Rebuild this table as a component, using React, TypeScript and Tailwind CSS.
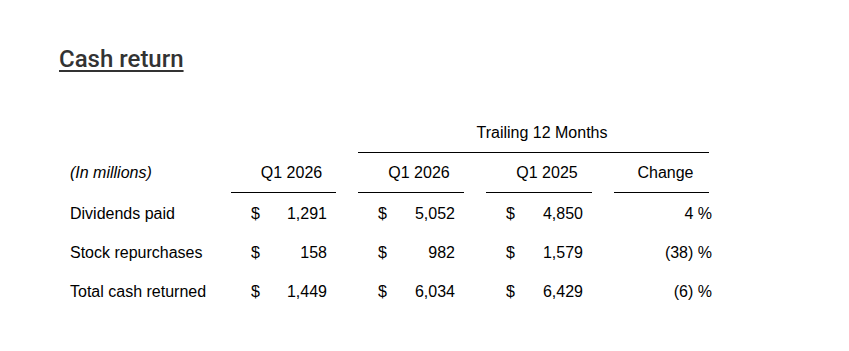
const rows = [
  { label: 'Dividends paid', q1: '1,291', ttm26: '5,052', ttm25: '4,850', change: '4 %' },
  { label: 'Stock repurchases', q1: '158', ttm26: '982', ttm25: '1,579', change: '(38) %' },
  { label: 'Total cash returned', q1: '1,449', ttm26: '6,034', ttm25: '6,429', change: '(6) %' },
];

function Money({ value }: { value: string }) {
  return (
    <div className="flex justify-between pl-5 pr-[9px]">
      <span>$</span>
      <span>{value}</span>
    </div>
  );
}

export default function App() {
  return (
    <div className="h-[351px] w-[849px] bg-white pl-[59px] pt-[45px]">
      <h1 className="font-['Roboto',sans-serif] text-[24px] font-medium leading-[28px] text-[#333333] underline decoration-2 underline-offset-[3px]">
        Cash return
      </h1>

      {/* table */}
      <div className="mt-[51px] grid grid-cols-[150px_105px_106px_106px_95px] gap-x-[22px] font-['Liberation_Sans',Arial,sans-serif] text-[16px] leading-[18px] text-black">
        <div className="col-start-3 col-end-6 border-b border-black pb-[10px] pl-[17px] text-center">
          Trailing 12 Months
        </div>

        {/* header row */}
        <div className="mt-[11px] pl-[11px] italic">(In millions)</div>
        <div className="mt-[11px] border-b border-black pb-[10px] pl-4 text-center">Q1 2026</div>
        <div className="mt-[11px] border-b border-black pb-[10px] pl-4 text-center">Q1 2026</div>
        <div className="mt-[11px] border-b border-black pb-[10px] pl-4 text-center">Q1 2025</div>
        <div className="mt-[11px] border-b border-black pb-[10px] pl-2 text-center">Change</div>

        {rows.map((r, i) => (
          <div key={r.label} className="contents">
            <div className={i === 0 ? 'mt-[12px] pl-[11px]' : 'mt-[21px] pl-[11px]'}>{r.label}</div>
            <div className={i === 0 ? 'mt-[12px]' : 'mt-[21px]'}>
              <Money value={r.q1} />
            </div>
            <div className={i === 0 ? 'mt-[12px]' : 'mt-[21px]'}>
              <Money value={r.ttm26} />
            </div>
            <div className={i === 0 ? 'mt-[12px]' : 'mt-[21px]'}>
              <Money value={r.ttm25} />
            </div>
            <div className={i === 0 ? 'mt-[12px] -mr-[3px] text-right' : 'mt-[21px] -mr-[3px] text-right'}>
              {r.change}
            </div>
          </div>
        ))}
      </div>
    </div>
  );
}
